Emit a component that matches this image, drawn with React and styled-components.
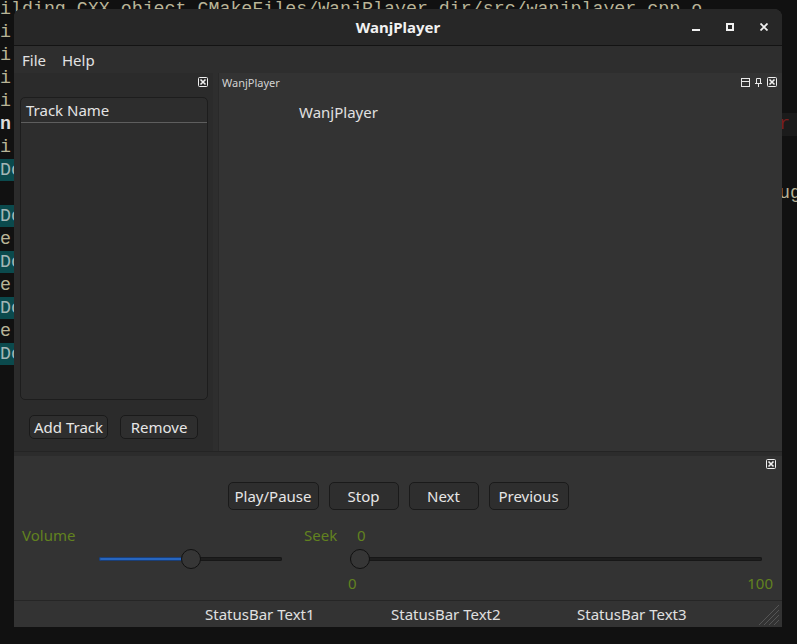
import styled, { createGlobalStyle } from 'styled-components';

const GlobalStyle = createGlobalStyle`
  html, body { margin: 0; padding: 0; background: #111111; }
  *, *::before, *::after { box-sizing: border-box; }
  body { font-family: "Noto Sans", "DejaVu Sans", sans-serif; }
`;

// terminal text behind the window: [text, kind, tail]
const TERM = [
  ['ilding CXX object CMakeFiles/WanjPlayer.dir/src/wanjplayer.cpp.o'],
  ['i'], ['i'], ['i'], ['i'],
  ['n', 'bold', 'r'],
  ['i'],
  ['Do', 'teal'],
  [' [', 'dim', 'ug'],
  ['Do', 'teal'], ['e'], ['Do', 'teal'], ['e'], ['Do', 'teal'], ['e'], ['Do', 'teal'],
];

const CloseIcon = () => (
  <svg width="10" height="10" viewBox="0 0 10 10">
    <rect x="0.5" y="0.5" width="9" height="9" rx="1" fill="none" stroke="#f0f0f0" />
    <path d="M2.5 2.5 L7.5 7.5 M7.5 2.5 L2.5 7.5" stroke="#f0f0f0" strokeWidth="1.6" />
  </svg>
);

const FloatIcon = () => (
  <svg width="9" height="9" viewBox="0 0 9 9">
    <rect x="0.5" y="0.5" width="8" height="8" fill="none" stroke="#e8e8e8" />
    <path d="M0.5 3.5 H8.5" stroke="#e8e8e8" />
  </svg>
);

const PinIcon = () => (
  <svg width="7" height="9" viewBox="0 0 7 9">
    <path d="M1.5 0.5 H5.5 V5.5 M1.5 0.5 V5.5 M0 5.5 H7 M3.5 5.5 V9" fill="none" stroke="#e8e8e8" />
  </svg>
);

const Slider = ({ value, fill }) => (
  <SliderTrack>
    <Groove />
    {fill && <GrooveFill style={{ width: `calc((100% - 20px) * ${value} + 10px)` }} />}
    <Handle style={{ left: `calc((100% - 20px) * ${value})` }} />
  </SliderTrack>
);

export default function App() {
  return (
    <Desktop>
      <GlobalStyle />
      <Terminal>
        {TERM.map(([text, kind, tail], i) => (
          <TermLine key={i} $kind={kind}>
            {kind === 'teal' ? <Hl>{text + '                    '}</Hl> : text}
            {tail && (
              <>
                {' '.repeat(71 - text.length)}
                <Tail $bold={kind === 'bold'}>{tail}</Tail>
              </>
            )}
          </TermLine>
        ))}
      </Terminal>

      <Window>
        <TitleBar>
          <Title>WanjPlayer</Title>
          <Controls>
            <CtrlButton>
              <svg width="8" height="8" viewBox="0 0 8 8">
                <path d="M0 7 H8" stroke="#f0f0f0" strokeWidth="2" />
              </svg>
            </CtrlButton>
            <CtrlButton>
              <svg width="8" height="8" viewBox="0 0 8 8">
                <rect x="1" y="1" width="6" height="6" fill="none" stroke="#f0f0f0" strokeWidth="2" />
              </svg>
            </CtrlButton>
            <CtrlButton>
              <svg width="8" height="8" viewBox="0 0 8 8">
                <path d="M0.5 0.5 L7.5 7.5 M7.5 0.5 L0.5 7.5" stroke="#f0f0f0" strokeWidth="1.8" />
              </svg>
            </CtrlButton>
          </Controls>
        </TitleBar>

        <MenuBar>
          <MenuItem>File</MenuItem>
          <MenuItem>Help</MenuItem>
        </MenuBar>

        <MainArea>
          <LeftDock>
            <DockTitle>
              <span />
              <DockButtons><CloseIcon /></DockButtons>
            </DockTitle>
            <TrackList>
              <TrackHeader>Track Name</TrackHeader>
            </TrackList>
            <ButtonRow $gap={12}>
              <PushButton $w={78} $h={24} $pad={4}>Add Track</PushButton>
              <PushButton $w={78} $h={24} $pad={4}>Remove</PushButton>
            </ButtonRow>
          </LeftDock>
          <VSplitter />
          <CentralDock>
            <DockTitle>
              <DockLabel>WanjPlayer</DockLabel>
              <DockButtons>
                <FloatIcon />
                <PinIcon />
                <CloseIcon />
              </DockButtons>
            </DockTitle>
            <CentralBody>WanjPlayer</CentralBody>
          </CentralDock>
        </MainArea>

        <HSplitter />

        <BottomDock>
          <BottomTitle><CloseIcon /></BottomTitle>
          <ButtonRow $gap={10} $top={10}>
            <PushButton $w={70} $h={28} $pad={6}>Play/Pause</PushButton>
            <PushButton $w={70} $h={28} $pad={6}>Stop</PushButton>
            <PushButton $w={70} $h={28} $pad={6}>Next</PushButton>
            <PushButton $w={80} $h={28} $pad={6}>Previous</PushButton>
          </ButtonRow>
          <SliderGrid>
            <GreenLabel $col={1} $row={1}>Volume</GreenLabel>
            <GreenLabel $col={3} $row={1} $pad={22}>Seek</GreenLabel>
            <GreenLabel $col={4} $row={1} $pad={9}>0</GreenLabel>
            <SliderCell $col={2} $row={2}>
              <Slider value={0.5} fill />
            </SliderCell>
            <SliderCell $col={4} $row={2} $seek>
              <Slider value={0} />
            </SliderCell>
            <RangeLabels>
              <span>0</span>
              <span>100</span>
            </RangeLabels>
          </SliderGrid>
        </BottomDock>

        <StatusBar>
          <StatusLabel>StatusBar Text1</StatusLabel>
          <StatusLabel>StatusBar Text2</StatusLabel>
          <StatusLabel>StatusBar Text3</StatusLabel>
          <Grip>
            <svg width="22" height="22" viewBox="0 0 22 22">
              <path d="M22 2 L2 22 M22 7 L7 22 M22 12 L12 22 M22 17 L17 22" stroke="#555" strokeWidth="1" />
            </svg>
          </Grip>
        </StatusBar>
      </Window>
    </Desktop>
  );
}

const Desktop = styled.div`
  position: relative;
  width: 797px;
  height: 644px;
  overflow: hidden;
  background: #111111;
`;

const Terminal = styled.div`
  margin-top: -2px;
  font-family: "Liberation Mono", "DejaVu Sans Mono", monospace;
  font-size: 18.3px;
  color: #b9b497;
`;

const TermLine = styled.div`
  height: 23px;
  line-height: 23px;
  white-space: pre;
  font-weight: ${p => (p.$kind === 'bold' ? 700 : 400)};
  color: ${p => (p.$kind === 'bold' ? '#dcdcdc' : p.$kind === 'dim' ? '#5e5a46' : 'inherit')};
`;

const Hl = styled.span`
  display: inline-block;
  height: 22px;
  background: #0b4a4d;
  color: #a3b6b6;
`;

const Tail = styled.span`
  display: inline-block;
  height: 23px;
  padding-right: 20px;
  font-weight: 400;
  background: ${p => (p.$bold ? '#1b1b1b' : 'transparent')};
  color: ${p => (p.$bold ? '#7c1c1c' : '#b9b497')};
`;

const Window = styled.div`
  position: absolute;
  left: 14px;
  top: 9px;
  width: 768px;
  height: 618px;
  display: flex;
  flex-direction: column;
  border-radius: 8px 8px 0 0;
  overflow: hidden;
  background: #333333;
  color: #dedede;
  font-size: 15px;
`;

const TitleBar = styled.div`
  flex: none;
  height: 37px;
  display: grid;
  grid-template-columns: 1fr auto 1fr;
  align-items: center;
  background: #272727;
  border-bottom: 1px solid #131313;
`;

const Title = styled.div`
  grid-column: 2;
  font-weight: 700;
  font-size: 15px;
  color: #f2f2f2;
`;

const Controls = styled.div`
  grid-column: 3;
  justify-self: end;
  display: flex;
  gap: 10px;
  padding-right: 6px;
`;

const CtrlButton = styled.div`
  width: 24px;
  height: 24px;
  display: flex;
  align-items: center;
  justify-content: center;
`;

const MenuBar = styled.div`
  flex: none;
  height: 27px;
  display: flex;
  align-items: center;
  background: #2e2e2e;
`;

const MenuItem = styled.div`
  padding: 0 8px;
  font-size: 15px;
  color: #e2e2e2;
`;

const MainArea = styled.div`
  flex: none;
  height: 378px;
  display: flex;
`;

const LeftDock = styled.div`
  flex: none;
  width: 199px;
  display: flex;
  flex-direction: column;
  background: #2b2b2b;
`;

const DockTitle = styled.div`
  flex: none;
  height: 18px;
  display: flex;
  align-items: center;
  justify-content: space-between;
  padding: 0 5px 0 3px;
`;

const DockLabel = styled.div`
  font-size: 11px;
  color: #d2d2d2;
`;

const DockButtons = styled.div`
  display: flex;
  align-items: center;
  gap: 5px;
  svg { display: block; }
`;

const TrackList = styled.div`
  flex: none;
  height: 303px;
  margin: 6px 5px 0 6px;
  border: 1px solid #1d1d1d;
  border-radius: 5px;
  background: #2d2d2d;
`;

const TrackHeader = styled.div`
  height: 25px;
  line-height: 24px;
  padding-left: 5px;
  border-bottom: 1px solid #5e5e5e;
  font-size: 15px;
  color: #e4e4e4;
`;

const ButtonRow = styled.div`
  flex: none;
  display: flex;
  justify-content: center;
  gap: ${p => p.$gap}px;
  margin-top: ${p => p.$top ?? 15}px;
`;

const PushButton = styled.div`
  min-width: ${p => p.$w}px;
  height: ${p => p.$h}px;
  padding: 0 ${p => p.$pad}px;
  display: flex;
  align-items: center;
  justify-content: center;
  border: 1px solid #1a1a1a;
  border-radius: 5px;
  background: #2e2e2e;
  font-size: 15px;
  color: #e6e6e6;
`;

const VSplitter = styled.div`
  flex: none;
  width: 5px;
  background: #2e2e2e;
`;

const CentralDock = styled.div`
  flex: 1;
  display: flex;
  flex-direction: column;
  background: #333333;
  border-left: 1px solid #292929;
`;

const CentralBody = styled.div`
  padding: 11px 0 0 80px;
  line-height: 20px;
  font-size: 15px;
  color: #e0e0e0;
`;

const HSplitter = styled.div`
  flex: none;
  height: 5px;
  background: #2c2c2c;
  border-top: 1px solid #242424;
`;

const BottomDock = styled.div`
  flex: none;
  height: 144px;
  display: flex;
  flex-direction: column;
  background: #333333;
`;

const BottomTitle = styled.div`
  flex: none;
  height: 16px;
  display: flex;
  align-items: center;
  justify-content: flex-end;
  padding-right: 6px;
  svg { display: block; }
`;

const SliderGrid = styled.div`
  margin-top: 15px;
  display: grid;
  grid-template-columns: 77px 183px 66px 1fr;
  grid-template-rows: 20px 20px 20px;
  row-gap: 4px;
  padding: 0 9px 0 8px;
  align-items: center;
`;

const GreenLabel = styled.div`
  grid-column: ${p => p.$col};
  grid-row: ${p => p.$row};
  padding-left: ${p => p.$pad || 0}px;
  line-height: 20px;
  font-size: 15px;
  color: #62821f;
`;

const SliderCell = styled.div`
  grid-column: ${p => p.$col};
  grid-row: ${p => p.$row};
  margin: ${p => (p.$seek ? '0 11px 0 2px' : '0')};
`;

const RangeLabels = styled.div`
  grid-column: 4;
  grid-row: 3;
  display: flex;
  justify-content: space-between;
  line-height: 20px;
  font-size: 15px;
  color: #62821f;
`;

const SliderTrack = styled.div`
  position: relative;
  height: 20px;
`;

const Groove = styled.div`
  position: absolute;
  left: 0;
  right: 0;
  top: 8px;
  height: 4px;
  border-radius: 2px;
  background: #1e1e1e;
  box-shadow: inset 0 0 0 1px #171717;
`;

const GrooveFill = styled.div`
  position: absolute;
  left: 0;
  top: 8px;
  height: 4px;
  border-radius: 2px;
  background: #2766c0;
  box-shadow: inset 0 0 0 1px #1a3f78;
`;

const Handle = styled.div`
  position: absolute;
  top: 0;
  width: 20px;
  height: 20px;
  border-radius: 50%;
  background: #363636;
  border: 1px solid #111111;
`;

const StatusBar = styled.div`
  flex: none;
  height: 27px;
  display: flex;
  align-items: center;
  padding-left: 191px;
  border-top: 1px solid #262626;
  background: #333333;
`;

const StatusLabel = styled.div`
  flex: none;
  width: 186px;
  font-size: 15px;
  color: #e0e0e0;
  &:nth-of-type(3) { width: auto; }
`;

const Grip = styled.div`
  margin-left: auto;
  align-self: flex-end;
  padding: 0 3px 2px 0;
  svg { display: block; }
`;
